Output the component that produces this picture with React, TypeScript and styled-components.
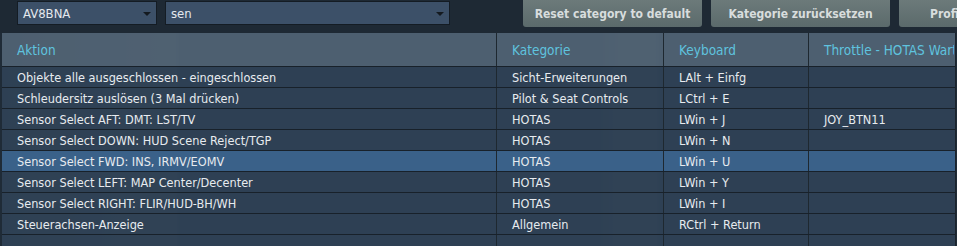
import styled, { createGlobalStyle } from 'styled-components'

const GlobalStyle = createGlobalStyle`
    html, body {
        margin: 0;
        padding: 0;
        background: #1c2631;
        font-family: "DejaVu Sans Condensed", "DejaVu Sans", sans-serif;
        font-stretch: condensed;
        overflow: hidden;
    }
`;

const Screen = styled.div`
    width: 957px;
    height: 246px;
    overflow: hidden;
    background:
        linear-gradient(90deg, rgba(255,255,255,0) 0px, rgba(255,255,255,0.04) 130px, rgba(255,255,255,0.05) 175px, rgba(255,255,255,0) 180px),
        linear-gradient(90deg, rgba(255,255,255,0) 600px, rgba(255,255,255,0.05) 620px, rgba(255,255,255,0.05) 655px, rgba(255,255,255,0) 660px),
        #1f2b37;
`;

const TopBar = styled.div`
    height: 33px;
    width: 957px;
    display: flex;
    align-items: flex-start;
    padding-left: 17px;
    box-sizing: border-box;
    gap: 8px;
    background: #1e2934;
    overflow: hidden;
`;

const Select = styled.div<{ $w: number }>`
    flex: 0 0 ${p => p.$w}px;
    height: 24px;
    margin-top: 1px;
    box-sizing: border-box;
    border: 1px solid #141c24;
    background: #3c5068;
    color: #e4e9ee;
    font-size: 13px;
    display: flex;
    align-items: center;
    justify-content: space-between;
    padding: 0 5px 0 5px;
`;

const Arrow = styled.span`
    width: 0;
    height: 0;
    border-left: 4px solid transparent;
    border-right: 4px solid transparent;
    border-top: 4px solid #141a20;
    margin-top: 2px;
`;

const Buttons = styled.div`
    display: flex;
    flex-shrink: 0;
    gap: 9px;
    margin-left: 65px;
`;

const Button = styled.div<{ $pad?: number }>`
    flex: 0 0 179px;
    height: 27px;
    box-sizing: border-box;
    background: linear-gradient(#6c7a7a, #5b6a6b);
    border-radius: 0 0 3px 3px;
    color: #d8dddd;
    font-weight: bold;
    font-size: 12px;
    display: flex;
    align-items: center;
    justify-content: ${p => (p.$pad ? 'flex-start' : 'center')};
    padding-left: ${p => p.$pad ?? 0}px;
    white-space: nowrap;
    overflow: hidden;
`;

const Table = styled.div`
    margin-left: 2px;
    width: 953px;
    border-right: 1px solid #1b242d;
`;

const Row = styled.div<{ $head?: boolean; $sel?: boolean }>`
    display: grid;
    grid-template-columns: 494px 167px 145px 146px;
    height: ${p => (p.$head ? 34 : 21)}px;
    box-sizing: border-box;
    border-bottom: 1px solid #18212a;
    background: ${p => (p.$head ? 'rgba(86,104,122,0.85)' : p.$sel ? '#3a6189' : 'rgba(50,70,90,0.82)')};
    color: ${p => (p.$head ? '#5fc3df' : '#e7ebef')};
    font-size: ${p => (p.$head ? 13.5 : 12.6)}px;
`;

const Cell = styled.div<{ $first?: boolean }>`
    display: flex;
    align-items: center;
    padding-left: 15px;
    border-left: ${p => (p.$first ? 'none' : '1px solid #1e2830')};
    white-space: nowrap;
    overflow: hidden;
`;

const rows: [string, string, string, string][] = [
    ['Objekte alle ausgeschlossen - eingeschlossen', 'Sicht-Erweiterungen', 'LAlt + Einfg', ''],
    ['Schleudersitz auslösen (3 Mal drücken)', 'Pilot & Seat Controls', 'LCtrl + E', ''],
    ['Sensor Select AFT: DMT: LST/TV', 'HOTAS', 'LWin + J', 'JOY_BTN11'],
    ['Sensor Select DOWN: HUD Scene Reject/TGP', 'HOTAS', 'LWin + N', ''],
    ['Sensor Select FWD: INS, IRMV/EOMV', 'HOTAS', 'LWin + U', ''],
    ['Sensor Select LEFT: MAP Center/Decenter', 'HOTAS', 'LWin + Y', ''],
    ['Sensor Select RIGHT: FLIR/HUD-BH/WH', 'HOTAS', 'LWin + I', ''],
    ['Steuerachsen-Anzeige', 'Allgemein', 'RCtrl + Return', ''],
    ['', '', '', ''],
];

export default function App() {
    return (
        <Screen>
            <GlobalStyle />
            <TopBar>
                <Select $w={140}>AV8BNA<Arrow /></Select>
                <Select $w={285}>sen<Arrow /></Select>
                <Buttons>
                    <Button>Reset category to default</Button>
                    <Button>Kategorie zurücksetzen</Button>
                    <Button $pad={31}>Profil speichern</Button>
                </Buttons>
            </TopBar>
            <Table>
                <Row $head>
                    <Cell $first>Aktion</Cell>
                    <Cell>Kategorie</Cell>
                    <Cell>Keyboard</Cell>
                    <Cell>Throttle - HOTAS Warthog</Cell>
                </Row>
                {rows.map((r, i) => (
                    <Row key={i} $sel={i === 4}>
                        <Cell $first>{r[0]}</Cell>
                        <Cell>{r[1]}</Cell>
                        <Cell>{r[2]}</Cell>
                        <Cell>{r[3]}</Cell>
                    </Row>
                ))}
            </Table>
        </Screen>
    )
}
